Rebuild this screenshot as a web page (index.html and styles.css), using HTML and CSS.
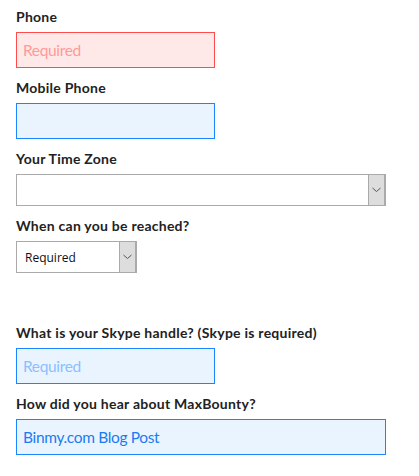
FILE: index.html
```html
<!DOCTYPE html>
<html>
<head>
<meta charset="utf-8">
<link rel="stylesheet" href="styles.css">
</head>
<body>
<form class="form">
  <div class="field">
    <label class="label">Phone</label>
    <input class="input input-error input-short" placeholder="Required">
  </div>
  <div class="field">
    <label class="label">Mobile Phone</label>
    <input class="input input-active input-short">
  </div>
  <div class="field">
    <label class="label">Your Time Zone</label>
    <div class="select select-wide">
      <select class="select-native"><option></option></select>
      <span class="select-arrow"><svg width="9" height="6" viewBox="0 0 9 6"><path d="M0.5 1 L4.5 4.5 L8.5 1" fill="none" stroke="#555" stroke-width="1"/></svg></span>
    </div>
  </div>
  <div class="field field-gap">
    <label class="label">When can you be reached?</label>
    <div class="select select-small">
      <select class="select-native"><option>Required</option></select>
      <span class="select-arrow"><svg width="9" height="6" viewBox="0 0 9 6"><path d="M0.5 1 L4.5 4.5 L8.5 1" fill="none" stroke="#555" stroke-width="1"/></svg></span>
    </div>
  </div>
  <div class="field">
    <label class="label">What is your Skype handle? (Skype is required)</label>
    <input class="input input-active input-short" placeholder="Required">
  </div>
  <div class="field">
    <label class="label">How did you hear about MaxBounty?</label>
    <input class="input input-active input-wide" value="Binmy.com Blog Post">
  </div>
</form>
</body>
</html>
```
FILE: styles.css
```css
* { box-sizing: border-box; }
html, body { margin: 0; padding: 0; background: #fff; }
body { font-family: "Lato", "Liberation Sans", sans-serif; }
.form { display: flex; flex-direction: column; padding: 9px 16px 0 16px; }
.field { display: flex; flex-direction: column; align-items: flex-start; margin-bottom: 12px; }
.field-gap { margin-bottom: 52px; }
.label { font-size: 14px; font-weight: 700; color: #222; line-height: 16px; margin-bottom: 7px; letter-spacing: 0.25px; }
.input {
  height: 36px; padding: 0 6px; font-family: inherit; font-size: 15.5px; letter-spacing: -0.35px;
  border: 1px solid #aaa; outline: none;
}
.input-short { width: 199px; }
.input-wide { width: 370px; }
.input-error { border-color: #ff4d4d; background: #ffe8e8; }
.input-error::placeholder { color: #ff9a9a; }
.input-active { border-color: #1a85ff; background: #eaf4ff; color: #1a7bf2; }
.input-active::placeholder { color: #8cc0ff; }
.select { display: flex; border: 1px solid #aaa; background: #fff; }
.select-wide { width: 370px; height: 32px; }
.select-small { width: 121px; height: 32px; }
.select-native {
  appearance: none; -webkit-appearance: none; border: none; background: transparent;
  flex: 1; min-width: 0; font-family: "Open Sans", "Liberation Sans", sans-serif; font-size: 12px;
  color: #111; padding: 0 8px; outline: none;
}
.select-arrow {
  width: 17px; background: #ddd; border-left: 1px solid #aaa; border-right: 1px solid #aaa;
  display: flex; align-items: center; justify-content: center;
}
```
